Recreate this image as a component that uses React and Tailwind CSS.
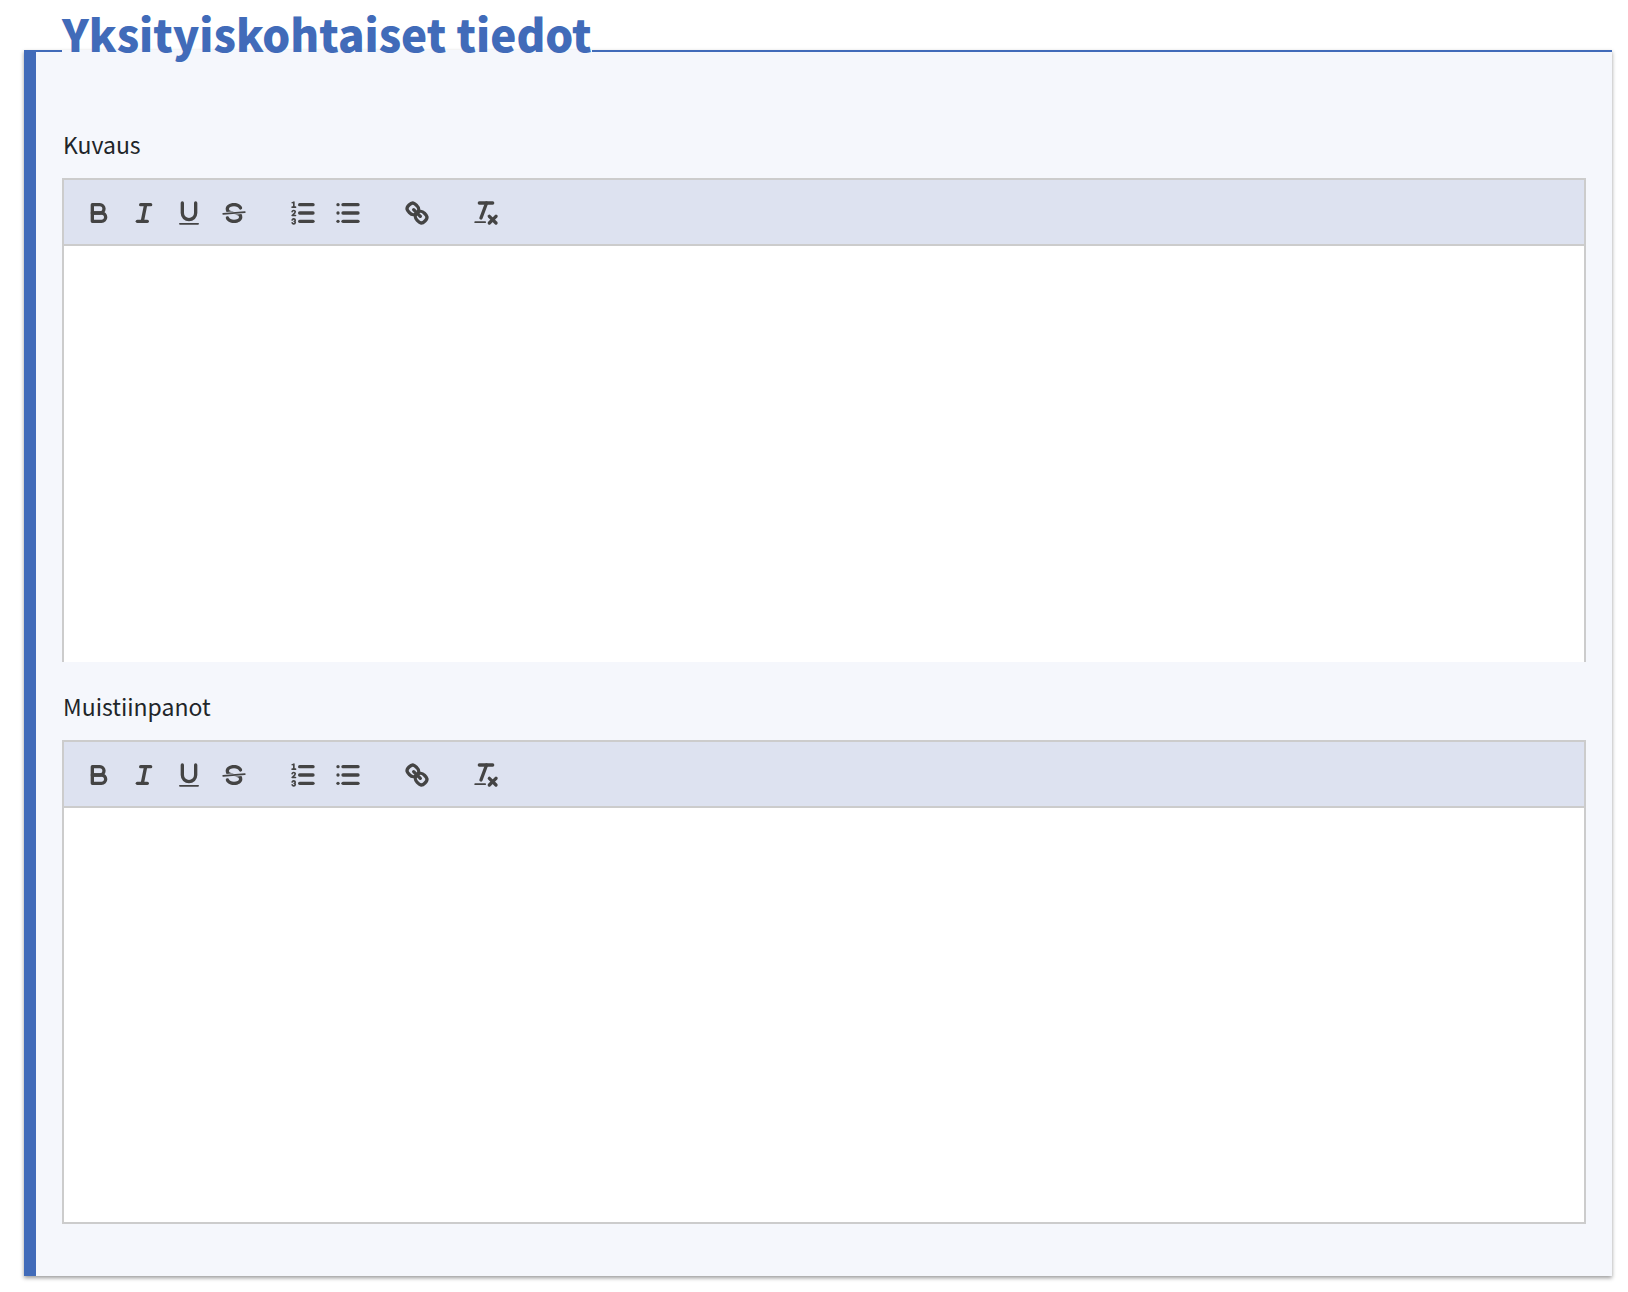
import { useId } from 'react'

const ICONS = {
  bold: (
    <>
      <path d="M5,4H9.5A2.5,2.5,0,0,1,12,6.5v0A2.5,2.5,0,0,1,9.5,9H5V4Z" />
      <path d="M5,9h5.5A2.5,2.5,0,0,1,13,11.5v0A2.5,2.5,0,0,1,10.5,14H5V9Z" />
    </>
  ),
  italic: (
    <>
      <line x1="7" x2="13" y1="4" y2="4" />
      <line x1="5" x2="11" y1="14" y2="14" />
      <line x1="8" x2="10" y1="14" y2="4" />
    </>
  ),
  underline: (
    <>
      <path d="M5,3V9a4.012,4.012,0,0,0,4,4H9a4.012,4.012,0,0,0,4-4V3" />
      <rect fill="currentColor" stroke="none" x="3" y="15" width="12" height="1" rx="0.5" />
    </>
  ),
  strike: (
    <>
      <line strokeWidth="1" x1="15.5" x2="2.5" y1="8.5" y2="9.5" />
      <path
        fill="currentColor"
        stroke="none"
        d="M9.007,8C6.542,7.791,6,7.519,6,6.5,6,5.792,7.283,5,9,5c1.571,0,2.765.679,2.969,1.309a1,1,0,0,0,1.9-.617C13.356,4.106,11.354,3,9,3,6.2,3,4,4.538,4,6.5a3.2,3.2,0,0,0,.5,1.843Z"
      />
      <path
        fill="currentColor"
        stroke="none"
        d="M8.984,10C11.457,10.208,12,10.479,12,11.5c0,0.708-1.283,1.5-3,1.5-1.571,0-2.765-.679-2.969-1.309a1,1,0,1,0-1.9.617C4.644,13.894,6.646,15,9,15c2.8,0,5-1.538,5-3.5a3.2,3.2,0,0,0-.5-1.843Z"
      />
    </>
  ),
  ordered: (
    <>
      <line x1="7" x2="15" y1="4" y2="4" />
      <line x1="7" x2="15" y1="9" y2="9" />
      <line x1="7" x2="15" y1="14" y2="14" />
      <line strokeWidth="1" x1="2.5" x2="4.5" y1="5.5" y2="5.5" />
      <path
        fill="currentColor"
        stroke="none"
        d="M3.5,6A0.5,0.5,0,0,1,3,5.5V3.085l-0.276.138A0.5,0.5,0,0,1,2.053,3c-0.124-.247-0.023-0.324.224-0.447l1-.5A0.5,0.5,0,0,1,4,2.5v3A0.5,0.5,0,0,1,3.5,6Z"
      />
      <path strokeWidth="1" d="M4.5,10.5h-2c0-.234,1.85-1.076,1.85-2.234A0.959,0.959,0,0,0,2.5,8.156" />
      <path
        strokeWidth="1"
        d="M2.5,14.846a0.959,0.959,0,0,0,1.85-.109A0.7,0.7,0,0,0,3.75,14a0.688,0.688,0,0,0,.6-0.736,0.959,0.959,0,0,0-1.85-.109"
      />
    </>
  ),
  bullet: (
    <>
      <line x1="6" x2="15" y1="4" y2="4" />
      <line x1="6" x2="15" y1="9" y2="9" />
      <line x1="6" x2="15" y1="14" y2="14" />
      <line x1="3" x2="3" y1="4" y2="4" />
      <line x1="3" x2="3" y1="9" y2="9" />
      <line x1="3" x2="3" y1="14" y2="14" />
    </>
  ),
  link: (
    <>
      <line x1="7" x2="11" y1="7" y2="11" />
      <path d="M8.9,4.577a3.476,3.476,0,0,1,.36,4.679A3.476,3.476,0,0,1,4.577,8.9C3.185,7.5,2.035,6.4,4.217,4.217S7.5,3.185,8.9,4.577Z" />
      <path d="M13.423,9.1a3.476,3.476,0,0,0-4.679-.36,3.476,3.476,0,0,0,.36,4.679c1.392,1.392,2.5,2.542,4.679.36S14.815,10.5,13.423,9.1Z" />
    </>
  ),
  clean: (
    <>
      <line x1="5" x2="13" y1="3" y2="3" />
      <line x1="6" x2="9.35" y1="12" y2="3" />
      <line x1="11" x2="15" y1="11" y2="15" />
      <line x1="15" x2="11" y1="11" y2="15" />
      <rect fill="currentColor" stroke="none" x="2" y="14" width="7" height="1" rx="0.5" />
    </>
  ),
}

const TOOL_GROUPS = [
  [
    { icon: 'bold', label: 'Lihavointi' },
    { icon: 'italic', label: 'Kursivointi' },
    { icon: 'underline', label: 'Alleviivaus' },
    { icon: 'strike', label: 'Yliviivaus' },
  ],
  [
    { icon: 'ordered', label: 'Numeroitu luettelo' },
    { icon: 'bullet', label: 'Luettelo' },
  ],
  [{ icon: 'link', label: 'Linkki' }],
  [{ icon: 'clean', label: 'Poista muotoilu' }],
]

const ToolButton = ({ icon, label }) => (
  <button type="button" aria-label={label} className="pl-2 pr-[7px] text-[#444] hover:text-[#416bb9]">
    <svg
      viewBox="0 0 18 18"
      className="block size-[30px]"
      fill="none"
      stroke="currentColor"
      strokeWidth="2"
      strokeLinecap="round"
      strokeLinejoin="round"
    >
      {ICONS[icon]}
    </svg>
  </button>
)

const RichTextField = ({ label, last }) => {
  const id = useId()

  return (
    <div className="pt-7">
      <label htmlFor={id} className="block pl-px text-[23px] leading-8 text-[#212529]">
        {label}
      </label>
      <div className="mt-[18px] border-2 border-[#ccc] bg-[#dde2f0] flex gap-6 pt-[18px] pb-4 px-3">
        {TOOL_GROUPS.map((group, i) => (
          <div key={i} className="flex">
            {group.map((tool) => (
              <ToolButton key={tool.icon} {...tool} />
            ))}
          </div>
        ))}
      </div>
      <textarea
        id={id}
        className={`block w-full h-[416px] resize-none bg-white px-7 py-6 text-[23px] leading-8 border-x-2 border-[#ccc] outline-none ${
          last ? 'border-b-2' : ''
        }`}
      />
    </div>
  )
}

const App = () => (
  <main className="bg-white pt-0.5 pb-4 pl-6 pr-4 font-['Noto_Sans_CJK_JP','Noto_Sans',sans-serif]">
    <fieldset className="min-w-0 border-t-2 border-l-12 border-[#416bb9] bg-[#f5f7fc] px-[26px] pb-[52px] shadow-[0_2px_4px_rgba(0,0,0,0.4)]">
      <legend className="pb-9 text-[44px] leading-[62px] font-black text-[#416bb9]">
        Yksityiskohtaiset tiedot
      </legend>
      <RichTextField label="Kuvaus" />
      <RichTextField label="Muistiinpanot" last />
    </fieldset>
  </main>
)

export default App
